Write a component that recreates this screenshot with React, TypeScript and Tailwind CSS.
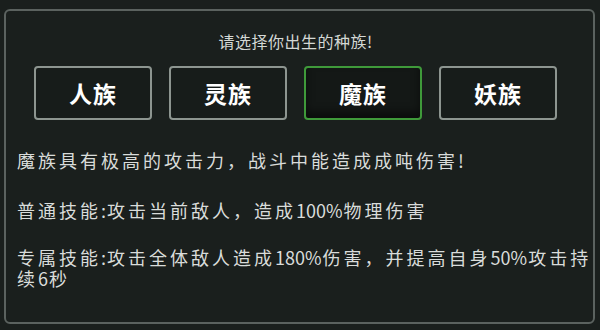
const races = [
  { id: 'human', label: '人族' },
  { id: 'spirit', label: '灵族' },
  { id: 'demon', label: '魔族' },
  { id: 'yao', label: '妖族' },
];

const font = { fontFamily: '"Noto Sans CJK SC", "Noto Sans", sans-serif' };

// half-width runs (digits, colon, percent) keep normal spacing
function N({ children }: { children: React.ReactNode }) {
  return <span className="tracking-[0px] mr-[1px]">{children}</span>;
}

export default function App() {
  const selected = 'demon';

  return (
    <div className="w-[600px] h-[330px] bg-[#1a1f1d] pt-[9px] pl-[4px] pr-[5px] pb-[6px]" style={font}>
      <div className="h-full border-2 border-[#5b625f] rounded-[6px] flex flex-col">
        {/* title + race buttons */}
        <div className="ml-[28px] w-[523px] flex flex-col">
          <div className="mt-[20px] h-[20px] leading-[20px] text-center text-[16px] tracking-[0.5px] text-[#d4d8d5]">
            请选择你出生的种族!
          </div>
          <div className="mt-[15px] flex gap-[17px]">
            {races.map((r) => (
              <div
                key={r.id}
                className={`w-[118px] h-[54px] rounded-[4px] border-2 flex items-center justify-center ${
                  r.id === selected
                    ? 'border-[#3f9a3a] bg-[#141816] shadow-[inset_0_-6px_8px_rgba(0,0,0,0.5)]'
                    : 'border-[#8d9590] bg-[#171c1a]'
                }`}
              >
                <span className="text-[23px] font-bold text-white tracking-[1px]">{r.label}</span>
              </div>
            ))}
          </div>
        </div>

        {/* description */}
        <div className="pl-[11px] text-[18px] leading-[21px] tracking-[3px] text-[#d9dcda]">
          <p className="mt-[30px]">魔族具有极高的攻击力，战斗中能造成成吨伤害!</p>
          <p className="mt-[29px]">
            普通技能<N>:</N>攻击当前敌人，造成<N>100%</N>物理伤害
          </p>
          <p className="mt-[26px]">
            专属技能<N>:</N>攻击全体敌人造成<N>180%</N>伤害，并提高自身<N>50%</N>攻击持续<N>6</N>秒
          </p>
        </div>
      </div>
    </div>
  );
}
